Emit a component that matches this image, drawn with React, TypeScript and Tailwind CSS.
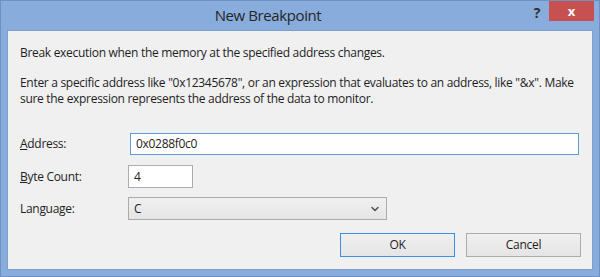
import { ChevronDown } from "lucide-react";

const ui = { fontFamily: '"Open Sans", "Noto Sans", sans-serif' };

export default function App() {
  return (
    <div
      className="w-[600px] h-[277px] bg-[#88acdb] border border-[#6d91c3] flex flex-col text-[#1e1e1e]"
      style={ui}
    >
      {/* title bar */}
      <div className="h-[29px] flex items-start shrink-0">
        <div className="flex-1 h-full flex items-center justify-center pl-[8px] text-[15px] tracking-[-0.4px] text-[#262626]">
          New Breakpoint
        </div>
        <div className="w-[20px] h-[22px] flex items-center justify-center text-[14px] font-bold text-[#303030]">
          ?
        </div>
        <div className="ml-[2px] w-[45px] h-[20px] bg-[#c75050] flex items-center justify-center text-white text-[13px] font-bold leading-none mr-[5px]">
          x
        </div>
      </div>

      {/* client area */}
      <div className="flex-1 mx-[6px] mb-[6px] border border-[#7b9fcf] bg-[#f0f0f0] flex flex-col pl-[12px] pt-[14px] text-[12px] leading-[16px] tracking-[-0.3px]">
        <p>Break execution when the memory at the specified address changes.</p>
        <p className="mt-[14px]">
          Enter a specific address like "0x12345678", or an expression that evaluates to an address, like "&amp;x". Make
          <br />
          sure the expression represents the address of the data to monitor.
        </p>

        <div className="mt-[26px] flex items-center h-[22px]">
          <span className="w-[110px]">
            <u>A</u>ddress:
          </span>
          <div className="w-[449px] h-[22px] border border-[#5a9ee6] bg-white flex items-center pl-[5px]">
            0x0288f0c0
          </div>
        </div>

        <div className="mt-[10px] flex items-center h-[23px]">
          <span className="w-[108px]">
            <u>B</u>yte Count:
          </span>
          <div className="w-[65px] h-[23px] border border-[#abadb3] bg-white flex items-center pl-[5px]">
            4
          </div>
        </div>

        <div className="mt-[9px] flex items-center h-[23px]">
          <span className="w-[108px]">Language:</span>
          <div className="w-[259px] h-[23px] border border-[#acacac] bg-gradient-to-b from-[#f0f0f0] to-[#e5e5e5] flex items-center pl-[5px] pr-[5px]">
            <span className="flex-1">C</span>
            <ChevronDown size={12} strokeWidth={3.2} color="#555" />
          </div>
        </div>

        <div className="mt-[13px] flex justify-end gap-[11px] pr-[11px]">
          <button className="w-[115px] h-[24px] border border-[#3c8fe8] bg-gradient-to-b from-[#f0f0f0] to-[#e5e5e5] text-[12px]">
            OK
          </button>
          <button className="w-[115px] h-[24px] border border-[#acacac] bg-gradient-to-b from-[#f0f0f0] to-[#e5e5e5] text-[12px]">
            Cancel
          </button>
        </div>
      </div>
    </div>
  );
}
